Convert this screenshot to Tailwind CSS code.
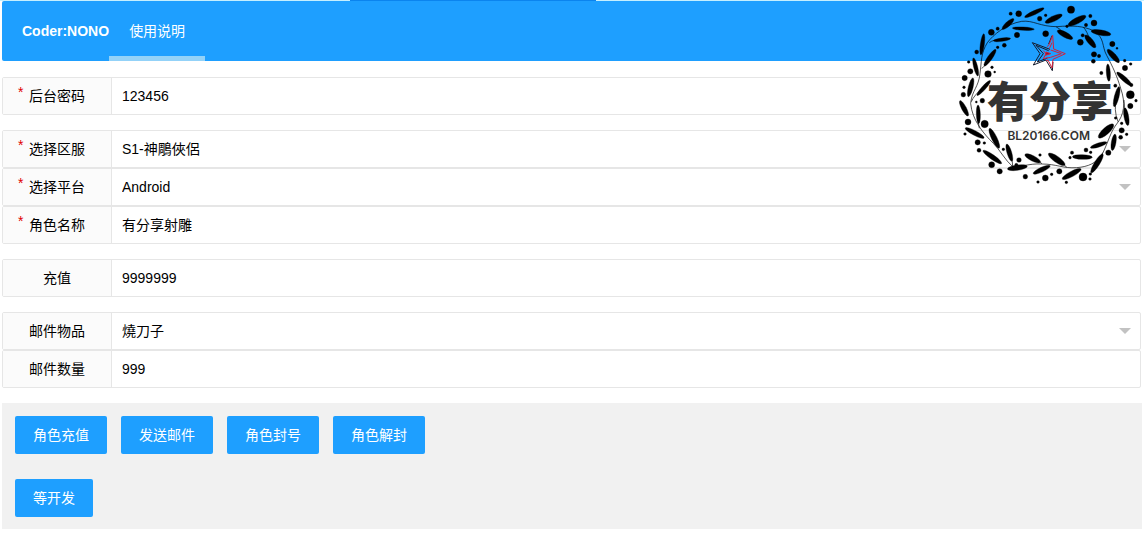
<!DOCTYPE html>
<html lang="zh-CN">
<head>
    <meta charset="UTF-8">
    <meta name="viewport" content="width=device-width, initial-scale=1.0">
    <title>使用说明</title>
    <script src="https://cdn.jsdelivr.net/npm/@tailwindcss/browser@4"></script>
</head>
<body class="relative bg-white text-sm text-black font-['Liberation_Sans','Noto_Sans_CJK_SC',sans-serif]">
    <div class="h-px bg-[#c5efff] flex justify-center">
        <div class="w-[246px] mr-[198px] bg-[#0b84ee]"></div>
    </div>

    <div class="mx-[2px]">
        <nav class="flex h-[60px] items-stretch rounded-[2px] bg-[#1e9fff] pl-5 text-white">
            <span class="flex items-center font-bold">Coder:NONO</span>
            <a href="#" class="flex items-center border-b-[5px] border-[#93d2f8] px-5 pt-[5px]">使用说明</a>
        </nav>

        <form id="gmForm" class="mt-4 mr-px flex flex-col gap-[15px]">
            <div class="flex h-[38px] rounded-[2px] border border-[#e6e6e6]">
                <label for="password" class="relative flex w-[109px] items-center justify-center border-r border-[#e6e6e6] bg-[#fbfbfb]"><span class="absolute top-1 left-[15px] text-[#e00000]">*</span>后台密码</label>
                <input type="text" id="password" value="123456" class="min-w-0 flex-1 px-[10px] outline-none">
            </div>

            <div>
                <div class="flex h-[38px] rounded-[2px] border border-[#e6e6e6]">
                    <label for="server" class="relative flex w-[109px] items-center justify-center border-r border-[#e6e6e6] bg-[#fbfbfb]"><span class="absolute top-1 left-[15px] text-[#e00000]">*</span>选择区服</label>
                    <div class="relative flex min-w-0 flex-1">
                        <select id="server" class="w-full appearance-none px-[10px] outline-none">
                            <option>S1-神鵰俠侶</option>
                        </select>
                        <svg class="pointer-events-none absolute top-[15px] right-[9px] h-[6px] w-3 fill-[#c2c2c2]" viewBox="0 0 12 6"><path d="M0 0h12L6 6z"/></svg>
                    </div>
                </div>
                <div class="flex h-[38px] rounded-[2px] border border-[#e6e6e6]">
                    <label for="platform" class="relative flex w-[109px] items-center justify-center border-r border-[#e6e6e6] bg-[#fbfbfb]"><span class="absolute top-1 left-[15px] text-[#e00000]">*</span>选择平台</label>
                    <div class="relative flex min-w-0 flex-1">
                        <select id="platform" class="w-full appearance-none px-[10px] outline-none">
                            <option>Android</option>
                        </select>
                        <svg class="pointer-events-none absolute top-[15px] right-[9px] h-[6px] w-3 fill-[#c2c2c2]" viewBox="0 0 12 6"><path d="M0 0h12L6 6z"/></svg>
                    </div>
                </div>
                <div class="flex h-[38px] rounded-[2px] border border-[#e6e6e6]">
                    <label for="role" class="relative flex w-[109px] items-center justify-center border-r border-[#e6e6e6] bg-[#fbfbfb]"><span class="absolute top-1 left-[15px] text-[#e00000]">*</span>角色名称</label>
                    <input type="text" id="role" value="有分享射雕" class="min-w-0 flex-1 px-[10px] outline-none">
                </div>
            </div>

            <div class="flex h-[38px] rounded-[2px] border border-[#e6e6e6]">
                <label for="charge" class="flex w-[109px] items-center justify-center border-r border-[#e6e6e6] bg-[#fbfbfb]">充值</label>
                <input type="text" id="charge" value="9999999" class="min-w-0 flex-1 px-[10px] outline-none">
            </div>

            <div>
                <div class="flex h-[38px] rounded-[2px] border border-[#e6e6e6]">
                    <label for="item" class="flex w-[109px] items-center justify-center border-r border-[#e6e6e6] bg-[#fbfbfb]">邮件物品</label>
                    <div class="relative flex min-w-0 flex-1">
                        <select id="item" class="w-full appearance-none px-[10px] outline-none">
                            <option>燒刀子</option>
                        </select>
                        <svg class="pointer-events-none absolute top-[15px] right-[9px] h-[6px] w-3 fill-[#c2c2c2]" viewBox="0 0 12 6"><path d="M0 0h12L6 6z"/></svg>
                    </div>
                </div>
                <div class="flex h-[38px] rounded-[2px] border border-[#e6e6e6]">
                    <label for="count" class="flex w-[109px] items-center justify-center border-r border-[#e6e6e6] bg-[#fbfbfb]">邮件数量</label>
                    <input type="text" id="count" value="999" class="min-w-0 flex-1 px-[10px] outline-none">
                </div>
            </div>
        </form>

        <div class="mt-[15px] flex flex-col gap-[25px] bg-[#f1f1f1] px-[13px] pt-[13px] pb-3 text-white">
            <div class="flex flex-wrap gap-[14px]">
                <button type="button" class="h-[38px] rounded-[2px] bg-[#1e9fff] px-[18px]">角色充值</button>
                <button type="button" class="h-[38px] rounded-[2px] bg-[#1e9fff] px-[18px]">发送邮件</button>
                <button type="button" class="h-[38px] rounded-[2px] bg-[#1e9fff] px-[18px]">角色封号</button>
                <button type="button" class="h-[38px] rounded-[2px] bg-[#1e9fff] px-[18px]">角色解封</button>
            </div>
            <div class="flex">
                <button type="button" class="h-[38px] rounded-[2px] bg-[#1e9fff] px-[18px]">等开发</button>
            </div>
        </div>
    </div>

    <!-- site stamp: leaf wreath, star and name -->
    <svg class="pointer-events-none absolute top-0 right-0 h-[190px] w-[194px]" viewBox="0 0 582 570">
        <path fill="none" stroke="#000" stroke-width="2" d="M62 310C66 270 86 262 90 220C95 185 92 160 112 128C130 104 168 72 215 64C250 60 270 80 320 80C370 76 400 78 430 92C465 112 455 140 470 166C488 200 500 225 512 265C528 310 522 345 500 372C482 395 475 425 458 460C440 490 415 500 380 503C340 506 320 492 275 492C235 490 215 502 188 500C165 480 150 450 130 430C100 400 66 360 62 310M156 119Q130 118 118 128M121 174Q105 200 95 205M101 262Q72 285 64 305M85 343Q84 370 88 385M178 458Q190 480 188 500M248 475Q270 480 275 492M320 478Q342 490 350 502M441 490Q455 470 458 458M528 350Q522 320 522 300M500 290Q490 330 504 365M345 104Q330 85 318 80M421 124Q410 90 400 82"/>
        <g fill="#000" stroke="#000" stroke-width="1">
            <ellipse rx="32" ry="6" transform="translate(253 38) rotate(-25)"/>
            <ellipse rx="28" ry="8" transform="translate(311 56) rotate(-25)"/>
            <ellipse rx="30" ry="9" transform="translate(381 62) rotate(-28)"/>
            <ellipse rx="30" ry="8" transform="translate(453 98) rotate(10)"/>
            <ellipse rx="26" ry="8" transform="translate(345 104) rotate(28)"/>
            <ellipse rx="24" ry="8" transform="translate(421 124) rotate(50)"/>
            <ellipse rx="26" ry="8" transform="translate(490 168) rotate(48)"/>
            <ellipse rx="33" ry="5" transform="translate(220 86) rotate(3)"/>
            <ellipse rx="23" ry="7" transform="translate(174 72) rotate(-42)"/>
            <ellipse rx="26" ry="5" transform="translate(156 119) rotate(-8)"/>
            <ellipse rx="32" ry="6" transform="translate(97 133) rotate(-82)"/>
            <ellipse rx="30" ry="7" transform="translate(120 173) rotate(-55)"/>
            <ellipse rx="28" ry="6" transform="translate(77 201) rotate(76)"/>
            <ellipse rx="30" ry="6" transform="translate(101 264) rotate(-48)"/>
            <ellipse rx="29" ry="7" transform="translate(62 262) rotate(-76)"/>
            <ellipse rx="26" ry="7" transform="translate(42 325) rotate(62)"/>
            <ellipse rx="28" ry="6" transform="translate(85 343) rotate(88)"/>
            <ellipse rx="32" ry="7" transform="translate(74 399) rotate(28)"/>
            <ellipse rx="26" ry="6" transform="translate(475 218) rotate(86)"/>
            <ellipse rx="30" ry="7" transform="translate(523 237) rotate(42)"/>
            <ellipse rx="31" ry="7" transform="translate(500 290) rotate(-76)"/>
            <ellipse rx="27" ry="7" transform="translate(529 350) rotate(80)"/>
            <ellipse rx="30" ry="10" transform="translate(468 393) rotate(-42)"/>
            <ellipse rx="33" ry="8" transform="translate(133 415) rotate(64)"/>
            <ellipse rx="27" ry="7" transform="translate(178 458) rotate(73)"/>
            <ellipse rx="34" ry="7" transform="translate(127 471) rotate(35)"/>
            <ellipse rx="30" ry="8" transform="translate(202 503) rotate(-8)"/>
            <ellipse rx="26" ry="8" transform="translate(248 475) rotate(27)"/>
            <ellipse rx="28" ry="7" transform="translate(275 509) rotate(-25)"/>
            <ellipse rx="30" ry="9" transform="translate(320 478) rotate(35)"/>
            <ellipse rx="32" ry="8" transform="translate(365 522) rotate(-28)"/>
            <ellipse rx="30" ry="7" transform="translate(397 471) rotate(2)"/>
            <ellipse rx="26" ry="6" transform="translate(446 435) rotate(-18)"/>
            <ellipse rx="25" ry="7" transform="translate(491 427) rotate(-80)"/>
            <ellipse rx="33" ry="8" transform="translate(441 490) rotate(-58)"/>
            <circle cx="182" cy="41" r="5"/><circle cx="206" cy="41" r="9"/><circle cx="269" cy="56" r="7"/>
            <circle cx="287" cy="46" r="4"/><circle cx="363" cy="29" r="11"/><circle cx="421" cy="48" r="5"/>
            <circle cx="432" cy="69" r="9"/><circle cx="408" cy="75" r="5"/><circle cx="287" cy="101" r="9"/>
            <circle cx="351" cy="79" r="4"/><circle cx="391" cy="127" r="9"/><circle cx="398" cy="106" r="5"/>
            <circle cx="487" cy="132" r="8"/><circle cx="501" cy="145" r="3"/><circle cx="201" cy="105" r="8"/>
            <circle cx="124" cy="97" r="9"/><circle cx="143" cy="86" r="5"/><circle cx="80" cy="156" r="6"/>
            <circle cx="163" cy="136" r="6"/><circle cx="143" cy="142" r="4"/><circle cx="126" cy="202" r="4"/>
            <circle cx="134" cy="216" r="3"/><circle cx="56" cy="186" r="4"/><circle cx="61" cy="214" r="8"/>
            <circle cx="44" cy="234" r="8"/><circle cx="114" cy="222" r="10"/><circle cx="40" cy="284" r="7"/>
            <circle cx="42" cy="262" r="4"/><circle cx="97" cy="302" r="7"/><circle cx="79" cy="306" r="3"/>
            <circle cx="54" cy="366" r="9"/><circle cx="104" cy="372" r="11"/><circle cx="45" cy="402" r="4"/>
            <circle cx="432" cy="163" r="8"/><circle cx="430" cy="184" r="6"/><circle cx="447" cy="168" r="5"/>
            <circle cx="454" cy="219" r="5"/><circle cx="525" cy="204" r="8"/><circle cx="542" cy="192" r="4"/>
            <circle cx="524" cy="182" r="4"/><circle cx="541" cy="284" r="12"/><circle cx="541" cy="318" r="8"/>
            <circle cx="558" cy="302" r="4"/><circle cx="544" cy="255" r="5"/><circle cx="496" cy="257" r="5"/>
            <circle cx="497" cy="354" r="4"/><circle cx="515" cy="391" r="8"/><circle cx="512" cy="412" r="6"/>
            <circle cx="530" cy="403" r="4"/><circle cx="515" cy="370" r="4"/><circle cx="83" cy="427" r="8"/>
            <circle cx="103" cy="429" r="4"/><circle cx="87" cy="451" r="6"/><circle cx="125" cy="494" r="9"/>
            <circle cx="149" cy="514" r="8"/><circle cx="207" cy="480" r="7"/><circle cx="199" cy="495" r="5"/>
            <circle cx="160" cy="448" r="4"/><circle cx="226" cy="530" r="7"/><circle cx="264" cy="546" r="4"/>
            <circle cx="286" cy="534" r="9"/><circle cx="305" cy="523" r="4"/><circle cx="328" cy="514" r="8"/>
            <circle cx="270" cy="465" r="4"/><circle cx="349" cy="547" r="4"/><circle cx="366" cy="458" r="5"/>
            <circle cx="360" cy="473" r="4"/><circle cx="399" cy="531" r="12"/><circle cx="421" cy="522" r="4"/>
            <circle cx="420" cy="537" r="4"/><circle cx="408" cy="450" r="6"/><circle cx="422" cy="457" r="4"/>
            <circle cx="475" cy="458" r="8"/>
        </g>
        <g fill="none" stroke-width="3">
            <path stroke="#151a2c" d="M300 148L247 128L270 161L250 195L288 180M296 152L258 136L280 161L262 186L292 174M289 182L307 212L309 186M296 132L306 107"/>
            <path stroke="#d0203c" d="M292 140L298 132L308 106L311 147L346 161L309 178L306 204L294 180L288 182M298 146L306 128M302 150L334 161L302 172L280 176L288 161L280 152"/>
            <path stroke="#d0203c" fill="#8c1730" d="M288 156L302 161L286 166z"/>
        </g>
        <g fill="#333" text-anchor="middle">
            <text x="300" y="351" font-size="126" font-weight="900" font-family="'Noto Sans CJK SC', sans-serif">有分享</text>
            <text x="296" y="420" font-size="36" font-weight="600" font-family="Inter, sans-serif">BL20166.COM</text>
        </g>
    </svg>
</body>
</html>
